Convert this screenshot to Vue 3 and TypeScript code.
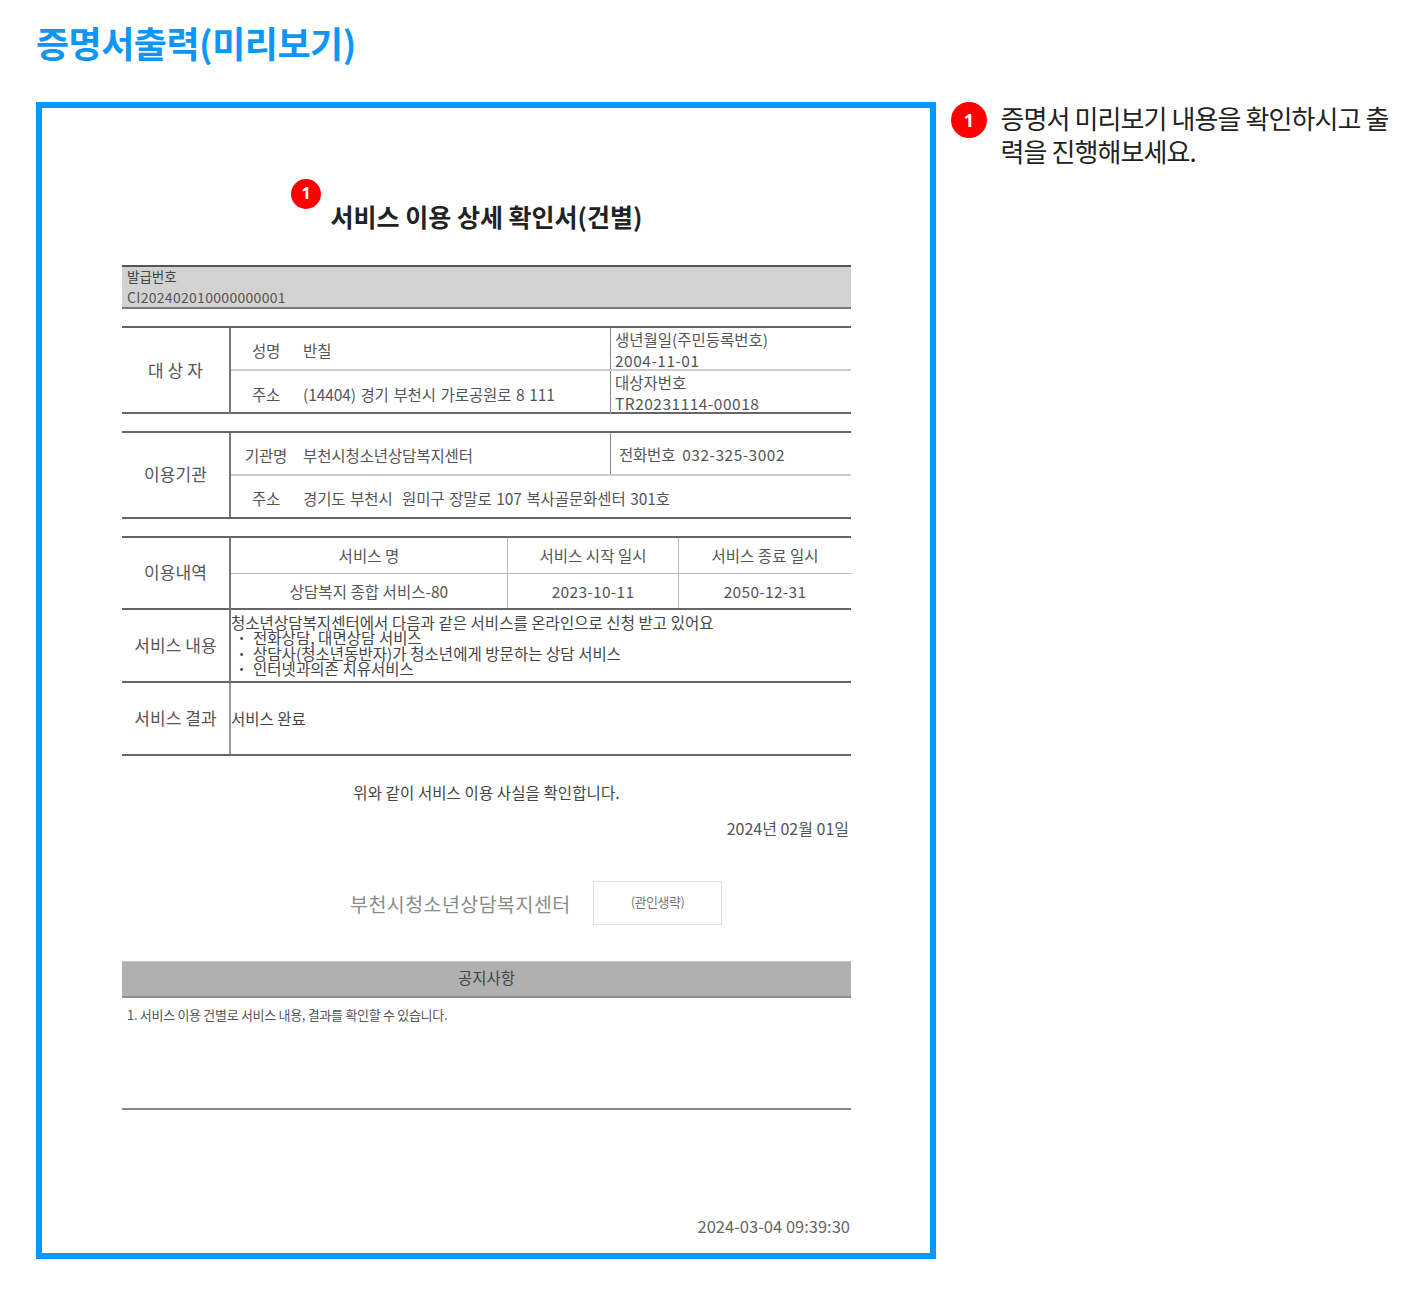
<script setup lang="ts">
const serviceItems: string[] = ['전화상담, 대면상담 서비스', '상담사(청소년동반자)가 청소년에게 방문하는 상담 서비스', '인터넷과의존 치유서비스']
</script>

<template>
  <div class="page">
    <h1 class="page-title">증명서출력(미리보기)</h1>
    <div class="main">
      <section class="frame">
        <div class="doc">
          <div class="doc-head">
            <span class="badge badge-sm">1</span>
            <h2 class="doc-title">서비스 이용 상세 확인서(건별)</h2>
          </div>

          <div class="issue">
            <div class="issue-label">발급번호</div>
            <div class="issue-value">CI202402010000000001</div>
          </div>

          <div class="tbl tbl-target">
            <div class="side">대 상 자</div>
            <div class="rows">
              <div class="row">
                <div class="cell-main"><span class="lab">성명</span><span class="val">반칠</span></div>
                <div class="cell-extra stack"><span>생년월일(주민등록번호)</span><span class="num">2004-11-01</span></div>
              </div>
              <div class="row">
                <div class="cell-main"><span class="lab">주소</span><span class="val">(14404) 경기 부천시 가로공원로 8 111</span></div>
                <div class="cell-extra stack"><span>대상자번호</span><span class="num">TR20231114-00018</span></div>
              </div>
            </div>
          </div>

          <div class="tbl tbl-org">
            <div class="side">이용기관</div>
            <div class="rows">
              <div class="row">
                <div class="cell-main"><span class="lab">기관명</span><span class="val">부천시청소년상담복지센터</span></div>
                <div class="cell-extra phone"><span>전화번호</span><span class="phone-num">032-325-3002</span></div>
              </div>
              <div class="row">
                <div class="cell-main"><span class="lab">주소</span><span class="val">경기도 부천시&nbsp; 원미구 장말로 107 복사골문화센터 301호</span></div>
              </div>
            </div>
          </div>

          <div class="tbl tbl-usage">
            <div class="side side-line side-usage">이용내역</div>
            <div class="usage">
              <div class="u-cell u-head">서비스 명</div>
              <div class="u-cell u-head">서비스 시작 일시</div>
              <div class="u-cell u-head u-last">서비스 종료 일시</div>
              <div class="u-cell">상담복지 종합 서비스-80</div>
              <div class="u-cell u-num">2023-10-11</div>
              <div class="u-cell u-last u-num">2050-12-31</div>
            </div>
            <div class="side side-line side-low">서비스 내용</div>
            <div class="detail">
              <div>청소년상담복지센터에서 다음과 같은 서비스를 온라인으로 신청 받고 있어요</div>
              <div v-for="item in serviceItems" :key="item" class="detail-item"><span class="dot">·</span><span>{{ item }}</span></div>
            </div>
            <div class="side side-low side-end">서비스 결과</div>
            <div class="result">서비스 완료</div>
          </div>

          <p class="confirm">위와 같이 서비스 이용 사실을 확인합니다.</p>
          <p class="date">2024년 02월 01일</p>
          <div class="seal-row">
            <span class="org-name">부천시청소년상담복지센터</span>
            <span class="seal">(관인생략)</span>
          </div>

          <div class="notice-head">공지사항</div>
          <div class="notice-body">1. 서비스 이용 건별로 서비스 내용, 결과를 확인할 수 있습니다.</div>
          <p class="stamp">2024-03-04 09:39:30</p>
        </div>
      </section>
      <aside class="guide">
        <span class="badge badge-lg">1</span>
        <p class="guide-text">증명서 미리보기 내용을 확인하시고 출력을 진행해보세요.</p>
      </aside>
    </div>
  </div>
</template>

<style>
html, body { margin: 0; background: #fff; }
</style>

<style scoped>
.page {
  width: 1423px;
  height: 1296px;
  box-sizing: border-box;
  padding: 0 0 0 36px;
  font-family: "Noto Sans CJK KR", "Noto Sans", sans-serif;
  color: #555;
  overflow: hidden;
}
.page-title {
  margin: 0;
  height: 102px;
  padding-top: 16px;
  box-sizing: border-box;
  font-size: 36px;
  line-height: 52px;
  font-weight: 700;
  letter-spacing: -0.5px;
  color: #0d96f6;
}
.main { display: flex; }
.frame {
  width: 900px;
  height: 1157px;
  box-sizing: border-box;
  border: 6px solid #0798fb;
  padding: 0 79px 0 80px;
  flex: none;
}
.doc { width: 729px; font-size: 15.5px; }
.doc-head {
  position: relative;
  height: 157px;
  box-sizing: border-box;
  padding-top: 89px;
  text-align: center;
}
.doc-title {
  margin: 0;
  font-size: 25px;
  line-height: 38px;
  font-weight: 700;
  letter-spacing: 0;
  color: #222;
}
.badge {
  display: flex;
  align-items: center;
  justify-content: center;
  border-radius: 50%;
  background: #f00;
  color: #fff;
  font-family: "Noto Sans", sans-serif;
  font-weight: 700;
}
.badge-sm {
  position: absolute;
  left: 169px;
  top: 71px;
  width: 30px;
  height: 30px;
  font-size: 16px;
  line-height: 28px;
  padding-bottom: 2px;
  box-sizing: border-box;
}
.badge-lg {
  width: 36px;
  height: 36px;
  font-size: 18px;
  flex: none;
  padding-bottom: 1px;
  box-sizing: border-box;
}
.issue {
  height: 44px;
  box-sizing: border-box;
  border-top: 2px solid #555;
  border-bottom: 2px solid #777;
  background: #d2d2d2;
  padding-left: 5px;
  font-size: 13.5px;
  line-height: 20px;
  color: #444;
}
.issue-label { height: 21px; letter-spacing: 0; margin-top: -1px; }
.issue-value { color: #555; font-size: 14px; letter-spacing: 0.3px; }
.tbl {
  display: grid;
  grid-template-columns: 109px 1fr;
  border-top: 2px solid #666;
  border-bottom: 2px solid #666;
}
.tbl-target { margin-top: 17px; height: 88px; box-sizing: border-box; }
.tbl-org { margin-top: 17px; height: 88px; box-sizing: border-box; }
.tbl-usage { margin-top: 17px; height: 220px; box-sizing: border-box; grid-template-rows: 72px 73px 1fr; }
.side {
  display: flex;
  align-items: center;
  justify-content: center;
  border-right: 2px solid #777;
  font-size: 17px;
  letter-spacing: 0.1px;
  color: #555;
}
.tbl-target .side { padding-bottom: 3px; }
.tbl-org .side { padding-bottom: 4px; }
.side-line { border-bottom: 2px solid #666; }
.side-usage { padding-bottom: 3px; }
.side-low { padding-bottom: 2px; }
.side-end { border-right-color: #999; }
.rows { display: flex; flex-direction: column; }
.row {
  flex: 1;
  display: flex;
  min-height: 0;
}
.row:first-child { flex: 0 0 41px; }
.row + .row { border-top: 2px solid #ccc; }
.tbl-org .cell-main, .tbl-target .cell-main { padding-top: 2px; box-sizing: border-box; }
.cell-main {
  width: 379px;
  flex: 1 1 auto;
  display: flex;
  align-items: center;
  font-size: 15.5px;
}
.row > .cell-main:not(:last-child) { flex: none; }
.lab { width: 70px; margin-right: 2px; text-align: center; flex: none; letter-spacing: -0.2px; }
.val { letter-spacing: -0.1px; word-spacing: 1.3px; white-space: nowrap; }
.cell-extra {
  flex: 1;
  border-left: 1px solid #888;
  padding-left: 4px;
  font-size: 15.5px;
  color: #555;
}
.stack { display: flex; flex-direction: column; justify-content: flex-start; padding-top: 1px; line-height: 21px; white-space: nowrap; }
.num { letter-spacing: 0.5px; }
.phone { display: flex; align-items: center; padding-left: 8px; letter-spacing: -0.2px; }
.phone-num { margin-left: 7px; letter-spacing: 0.5px; }
.usage {
  display: grid;
  grid-template-columns: 277px 171px 1fr;
  grid-template-rows: 36px 1fr;
  border-bottom: 2px solid #666;
}
.u-cell {
  display: flex;
  align-items: center;
  justify-content: center;
  border-right: 1.5px solid #bbb;
  font-size: 15.5px;
  letter-spacing: 0.05px;
}
.u-last { border-right: 0; }
.u-head { border-bottom: 1.5px solid #bbb; padding-bottom: 2px; box-sizing: border-box; }
.u-num { letter-spacing: 0.3px; }
.detail {
  border-bottom: 2px solid #666;
  padding: 5px 0 0 0;
  font-size: 15.5px;
  line-height: 15.4px;
  letter-spacing: 0.05px;
  color: #444;
  white-space: nowrap;
}
.detail-item { display: flex; }
.dot { width: 22px; padding-left: 6px; box-sizing: border-box; font-weight: 700; }
.result {
  display: flex;
  align-items: center;
  padding-left: 0;
  padding-bottom: 2px;
  font-size: 15.5px;
  color: #444;
}
.confirm {
  margin: 25px 0 0;
  height: 22px;
  line-height: 22px;
  text-align: center;
  font-size: 15.5px;
  letter-spacing: 0.1px;
  color: #444;
}
.date {
  margin: 14px 2px 0 0;
  height: 22px;
  line-height: 22px;
  text-align: right;
  font-size: 16px;
  color: #555;
}
.seal-row {
  margin-top: 42px;
  display: flex;
  align-items: center;
  padding-left: 228px;
}
.org-name {
  width: 243px;
  font-size: 19.5px;
  color: #8b8b8b;
  white-space: nowrap;
  letter-spacing: 0.45px;
}
.seal {
  width: 129px;
  height: 44px;
  box-sizing: border-box;
  border: 1.5px solid #ddd;
  padding-bottom: 3px;
  display: flex;
  align-items: center;
  justify-content: center;
  font-size: 13px;
  letter-spacing: -0.5px;
  color: #777;
}
.notice-head {
  margin-top: 36px;
  height: 37px;
  box-sizing: border-box;
  border-top: 1px solid #c4c4c4;
  border-bottom: 2px solid #8e8e8e;
  background: #b0b0b0;
  text-align: center;
  line-height: 31px;
  font-size: 15.5px;
  color: #444;
}
.notice-body {
  height: 112px;
  box-sizing: border-box;
  border-bottom: 2px solid #888;
  padding: 7px 0 0 5px;
  font-size: 13px;
  line-height: 20px;
  letter-spacing: -0.3px;
  color: #555;
}
.stamp {
  margin: 104px 1px 0 0;
  height: 24px;
  line-height: 24px;
  text-align: right;
  font-size: 16.5px;
  color: #666;
}
.guide {
  margin-left: 15px;
  width: 440px;
  display: flex;
  gap: 13.5px;
}
.guide-text {
  margin: -1.5px 0 0;
  width: 392px;
  font-size: 26px;
  line-height: 33px;
  letter-spacing: -0.9px;
  color: #222;
}
</style>
